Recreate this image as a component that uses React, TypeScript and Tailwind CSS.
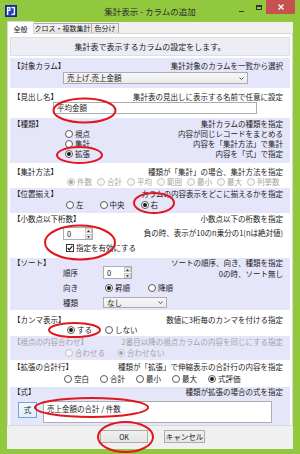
import React from 'react';

// Windows 8 style dialog: 集計表示 - カラムの追加

const jp = "font-['Noto_Sans_CJK_JP','Noto_Sans',sans-serif]";

interface RadioProps {
    label: string;
    checked?: boolean;
    disabled?: boolean;
}

const Radio: React.FC<RadioProps> = ({ label, checked = false, disabled = false }) => (
    <span className={`flex h-[10px] items-center gap-[2px] whitespace-nowrap ${disabled ? 'text-[#a3a3a3]' : ''}`}>
        <span
            className={`flex h-[8px] w-[8px] items-center justify-center rounded-full border ${
                disabled ? 'border-[#c4c4c4] bg-[#f6f6f6]' : 'border-[#5a5a5a] bg-white'
            }`}
        >
            {checked && <span className={`h-[4px] w-[4px] rounded-full ${disabled ? 'bg-[#a6a6a6]' : 'bg-[#1a1a1a]'}`} />}
        </span>
        <span className="leading-[10px]">{label}</span>
    </span>
);

const Row: React.FC<{ label: string; desc?: string; gray?: boolean }> = ({ label, desc, gray }) => (
    <div className={`flex h-[10px] items-center justify-between whitespace-nowrap leading-[10px] ${gray ? 'text-[#a3a3a3]' : ''}`}>
        <span>{label}</span>
        {desc && <span>{desc}</span>}
    </div>
);

const Chevron = () => (
    <svg width="5" height="3" viewBox="0 0 5 3">
        <path d="M0.5 0.5 L2.5 2.5 L4.5 0.5" fill="none" stroke="#444" strokeWidth="0.9" />
    </svg>
);

const Spinner: React.FC<{ value: string; width: string }> = ({ value, width }) => (
    <div className={`flex h-[13px] ${width} border border-[#abadb3] bg-white`}>
        <span className="flex-1 pl-[3px] leading-[11px]">{value}</span>
        <div className="flex w-[7px] flex-col gap-px bg-white">
            <span className="flex flex-1 items-center justify-center border border-[#c8c8c8] bg-[#ededed]">
                <svg width="3" height="2" viewBox="0 0 3 2"><path d="M0 2 L1.5 0 L3 2 Z" fill="#333" /></svg>
            </span>
            <span className="flex flex-1 items-center justify-center border border-[#c8c8c8] bg-[#ededed]">
                <svg width="3" height="2" viewBox="0 0 3 2"><path d="M0 0 L1.5 2 L3 0 Z" fill="#333" /></svg>
            </span>
        </div>
    </div>
);

const App: React.FC = () => {
    return (
        <div className={`relative h-[454px] w-[300px] overflow-hidden bg-[#92c83e] text-[7.5px] text-[#1a1a1a] ${jp}`}>
            {/* title bar */}
            <div className="grid h-[22px] grid-cols-[1fr_auto_1fr] items-center">
                <div className="pl-[5px]">
                    <svg width="12" height="12" viewBox="0 0 12 12">
                        <rect width="12" height="12" fill="#1b2b8a" />
                        <rect x="1" y="1" width="10" height="10" fill="#2a3fb0" />
                        <path d="M2 2 H5.5 V6 H3.3 V10 H2 Z M3.3 3.2 V4.8 H4.3 V3.2 Z" fill="#fff" fillRule="evenodd" />
                        <path d="M6.5 2 H10 V9 Q10 10 9 10 H6.5 V8.8 H8.7 V3.2 H6.5 Z" fill="#fff" />
                    </svg>
                </div>
                <span className="text-[8.5px] leading-[22px] text-[#2e2e2e]">集計表示 - カラムの追加</span>
                <div className="flex items-start justify-end self-start pr-[5px]">
                    <span className="mr-[4px] flex h-[14px] w-[14px] items-end justify-center pb-[2px]">
                        <span className="h-[1.5px] w-[5px] bg-[#333]" />
                    </span>
                    <span className="flex h-[14px] w-[14px] items-center justify-center">
                        <span className="h-[5px] w-[6px] border border-t-2 border-[#333]" />
                    </span>
                    <span className="flex h-[14px] w-[29px] items-center justify-center bg-[#c75050]">
                        <svg width="6" height="6" viewBox="0 0 6 6">
                            <path d="M0.5 0.5 L5.5 5.5 M5.5 0.5 L0.5 5.5" stroke="#fff" strokeWidth="1.3" />
                        </svg>
                    </span>
                </div>
            </div>

            {/* client area */}
            <div className="mx-[7px] flex h-[427px] flex-col bg-[#f0f0f0]">
                {/* tabs */}
                <div className="flex h-[11px] items-end text-[7px]">
                    <div className="relative z-10 -mb-px flex h-[13px] w-[27px] justify-center border border-b-0 border-[#d9d9d9] bg-white pt-[2px] leading-[10px]">
                        全般
                    </div>
                    <div className="flex h-[10px] w-[58px] justify-center border border-b-0 border-l-0 border-[#acacac] bg-gradient-to-b from-[#f2f2f2] to-[#e3e3e3] leading-[9px]">
                        クロス・複数集計
                    </div>
                    <div className="flex h-[10px] w-[27px] justify-center border border-b-0 border-l-0 border-[#acacac] bg-gradient-to-b from-[#f2f2f2] to-[#e3e3e3] leading-[9px]">
                        色分け
                    </div>
                </div>

                {/* tab page */}
                <div className="flex h-[393px] flex-col border border-[#d9d9d9] bg-white px-[2px] pt-[3px]">
                    <div className="flex h-[19px] items-center justify-center border border-[#dedee6] bg-[#ededf5] text-[8px]">
                        集計表で表示するカラムの設定をします。
                    </div>

                    {/* 対象カラム */}
                    <div className="mt-[2px] h-[30px] bg-[#e6e6fa] pl-[3px] pr-[7px] pt-[3px]">
                        <Row label="【対象カラム】" desc="集計対象のカラムを一覧から選択" />
                        <div className="ml-[50px] mt-[1px] flex h-[12px] w-[185px] items-center justify-between border border-[#acacac] bg-gradient-to-b from-[#f7f7f7] to-[#ebebeb] pl-[3px] pr-[3px] leading-[10px]">
                            <span>売上げ.売上金額</span>
                            <Chevron />
                        </div>
                    </div>

                    {/* 見出し名 */}
                    <div className="h-[30px] bg-white pl-[3px] pr-[7px] pt-[4px]">
                        <Row label="【見出し名】" desc="集計表の見出しに表示する名前で任意に設定" />
                        <div className="ml-[40px] flex h-[12px] w-[204px] items-center border border-[#abadb3] bg-white pl-[3px] leading-[10px]">
                            平均金額
                        </div>
                    </div>

                    {/* 種類 */}
                    <div className="h-[45px] bg-[#e6e6fa] pl-[3px] pr-[7px] pt-[1px]">
                        <Row label="【種類】" desc="集計カラムの種類を指定" />
                        {[
                            { label: '視点', checked: false, desc: '内容が同じレコードをまとめる' },
                            { label: '集計', checked: false, desc: '内容を「集計方法」で集計' },
                            { label: '拡張', checked: true, desc: '内容を「式」で指定' },
                        ].map((item) => (
                            <div key={item.label} className="flex h-[10px] items-center justify-between whitespace-nowrap leading-[10px]">
                                <div className="ml-[52px]">
                                    <Radio label={item.label} checked={item.checked} />
                                </div>
                                <span>{item.desc}</span>
                            </div>
                        ))}
                    </div>

                    {/* 集計方法 */}
                    <div className="h-[25px] bg-white pl-[3px] pr-[7px] pt-[4px]">
                        <Row label="【集計方法】" desc="種類が「集計」の場合、集計方法を指定" />
                        <div className="ml-[54px] flex gap-[5px]">
                            <Radio label="件数" checked disabled />
                            <Radio label="合計" disabled />
                            <Radio label="平均" disabled />
                            <Radio label="範囲" disabled />
                            <Radio label="最小" disabled />
                            <Radio label="最大" disabled />
                            <Radio label="列挙数" disabled />
                        </div>
                    </div>

                    {/* 位置揃え */}
                    <div className="h-[25px] bg-[#e6e6fa] pl-[3px] pr-[7px] pt-[1px]">
                        <Row label="【位置揃え】" desc="カラムの内容表示をどこに揃えるかを指定" />
                        <div className="ml-[53px] mt-[1px] flex gap-[16px]">
                            <Radio label="左" />
                            <Radio label="中央" />
                            <Radio label="右" checked />
                        </div>
                    </div>

                    {/* 小数点以下桁数 */}
                    <div className="h-[45px] bg-white pl-[3px] pr-[7px] pt-[1px]">
                        <Row label="【小数点以下桁数】" desc="小数点以下の桁数を指定" />
                        <div className="mt-[3px] flex items-start justify-between">
                            <div className="ml-[50px]">
                                <Spinner value="0" width="w-[30px]" />
                            </div>
                            <span className="mt-[1px] whitespace-nowrap leading-[10px]">負の時、表示が10のn乗分の1(nは絶対値)</span>
                        </div>
                        <div className="ml-[53px] mt-[3px] flex h-[10px] items-center gap-[2px]">
                            <span className="flex h-[8px] w-[8px] items-center justify-center border border-[#333] bg-white">
                                <svg width="6" height="6" viewBox="0 0 6 6">
                                    <path d="M0.8 3 L2.4 4.8 L5.3 1" fill="none" stroke="#111" strokeWidth="1.2" />
                                </svg>
                            </span>
                            <span className="leading-[10px]">指定を有効にする</span>
                        </div>
                    </div>

                    {/* ソート */}
                    <div className="h-[52px] bg-[#e6e6fa] pl-[3px] pr-[7px]">
                        <Row label="【ソート】" desc="ソートの順序、向き、種類を指定" />
                        <div className="-mt-[3px] flex items-start justify-between">
                            <div className="ml-[50px] grid grid-cols-[40px_auto] auto-rows-[15px] items-center">
                                <span className="leading-[10px]">順序</span>
                                <Spinner value="0" width="w-[29px]" />
                                <span className="leading-[10px]">向き</span>
                                <div className="ml-[2px] flex gap-[18px]">
                                    <Radio label="昇順" checked />
                                    <Radio label="降順" />
                                </div>
                                <span className="leading-[10px]">種類</span>
                                <div className="flex h-[11px] w-[64px] items-center justify-between border border-[#acacac] bg-gradient-to-b from-[#f7f7f7] to-[#ebebeb] pl-[3px] pr-[3px] leading-[9px]">
                                    <span>なし</span>
                                    <Chevron />
                                </div>
                            </div>
                            <span className="mt-[4px] whitespace-nowrap leading-[10px]">0の時、ソート無し</span>
                        </div>
                    </div>

                    {/* カンマ表示 */}
                    <div className="h-[26px] bg-white pl-[3px] pr-[7px] pt-[5px]">
                        <Row label="【カンマ表示】" desc="数値に3桁毎のカンマを付ける指定" />
                        <div className="ml-[54px] flex gap-[13px]">
                            <Radio label="する" checked />
                            <Radio label="しない" />
                        </div>
                    </div>

                    {/* 視点の内容合わせ */}
                    <div className="h-[24px] bg-[#e6e6fa] pl-[3px] pr-[7px] pt-[1px]">
                        <Row label="【視点の内容合わせ】" desc="2番目以降の視点カラムの内容を同じにする指定" gray />
                        <div className="ml-[52px] mt-[1px] flex gap-[12px]">
                            <Radio label="合わせる" disabled />
                            <Radio label="合わせない" checked disabled />
                        </div>
                    </div>

                    {/* 拡張の合計行 */}
                    <div className="h-[27px] bg-white pl-[3px] pr-[7px] pt-[2px]">
                        <Row label="【拡張の合計行】" desc="種類が「拡張」で伸縮表示の合計行の内容を指定" />
                        <div className="ml-[51px] mt-[2px] flex gap-[11px]">
                            <Radio label="空白" />
                            <Radio label="合計" />
                            <Radio label="最小" />
                            <Radio label="最大" />
                            <Radio label="式評価" checked />
                        </div>
                    </div>

                    {/* 式 */}
                    <div className="h-[38px] bg-[#e6e6fa] pl-[3px] pr-[7px]">
                        <Row label="【式】" desc="種類が拡張の場合の式を指定" />
                        <div className="ml-[5px] mt-[4px] flex items-start">
                            <button className="mt-[1px] flex h-[16px] w-[19px] items-center justify-center border border-[#6fa7dc] bg-gradient-to-b from-[#f3f8fd] to-[#e2eefa] text-[7.5px] leading-[10px]">
                                式
                            </button>
                            <div className="ml-[6px] h-[22px] w-[229px] border border-[#abadb3] bg-white pl-[3px] pt-[2px] leading-[10px]">
                                売上金額の合計 / 件数
                            </div>
                        </div>
                    </div>
                </div>

                {/* buttons */}
                <div className="ml-[93px] mt-[4px] flex gap-[16px]">
                    <button className="flex h-[13px] w-[48px] items-center justify-center border border-[#acacac] bg-gradient-to-b from-[#f0f0f0] to-[#e5e5e5] text-[7px] leading-[10px]">
                        OK
                    </button>
                    <button className="flex h-[13px] w-[41px] items-center justify-center border border-[#acacac] bg-gradient-to-b from-[#f0f0f0] to-[#e5e5e5] text-[7.5px] leading-[10px]">
                        キャンセル
                    </button>
                </div>
            </div>

            {/* red annotation ellipses */}
            <svg className="pointer-events-none absolute left-0 top-0" width="300" height="454" viewBox="0 0 300 454">
                <g fill="none" stroke="#e3151c" strokeWidth="2">
                    <ellipse cx="84.5" cy="110.5" rx="31" ry="12" />
                    <ellipse cx="79.5" cy="155" rx="22.5" ry="8" />
                    <ellipse cx="154" cy="203" rx="20" ry="10" />
                    <ellipse cx="80" cy="242.5" rx="35" ry="17" />
                    <ellipse cx="74.5" cy="330" rx="25.5" ry="7" />
                    <ellipse cx="91.5" cy="407.5" rx="56.5" ry="9.5" />
                    <ellipse cx="125.5" cy="437" rx="27.5" ry="15" />
                </g>
            </svg>
        </div>
    );
};

export default App;
